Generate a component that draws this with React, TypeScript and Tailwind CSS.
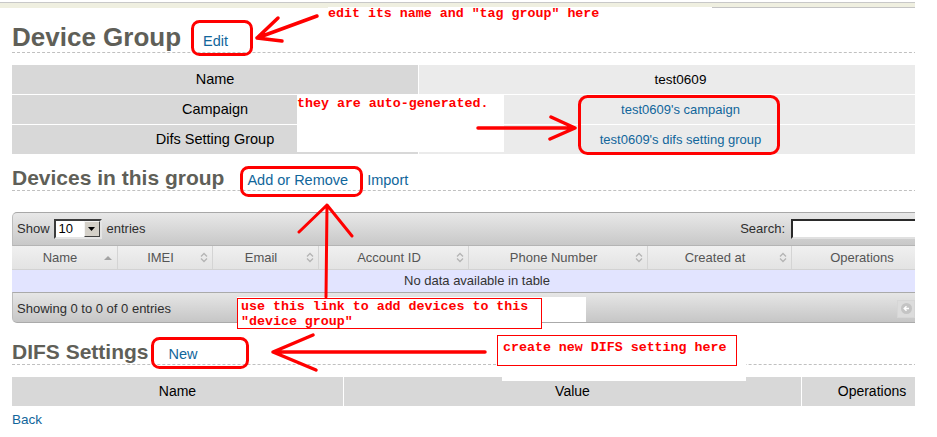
import React from 'react'

const mono = "font-['Liberation_Mono','Courier_New',monospace]"

const dtCols = [
  { label: 'Name', w: 'w-[106px]', sort: 'asc' },
  { label: 'IMEI', w: 'w-[95px]', sort: 'both' },
  { label: 'Email', w: 'w-[106px]', sort: 'both' },
  { label: 'Account ID', w: 'w-[150px]', sort: 'both' },
  { label: 'Phone Number', w: 'w-[179px]', sort: 'both' },
  { label: 'Created at', w: 'w-[144px]', sort: 'both' },
  { label: 'Operations', w: 'w-[150px]', sort: 'none' },
]

function SortIcon({ kind }: { kind: string }) {
  if (kind === 'asc')
    return (
      <svg className="absolute right-[5px] top-[9px]" width="8" height="5" viewBox="0 0 8 5">
        <path d="M0 5 L4 1 L8 5 Z" fill="#a3a3a3" />
      </svg>
    )
  if (kind === 'both')
    return (
      <svg className="absolute right-[4px] top-[6px]" width="8" height="11" viewBox="0 0 8 11">
        <path d="M1 4.5 L4 1.5 L7 4.5 M1 6.5 L4 9.5 L7 6.5" fill="none" stroke="#b4b4b4" strokeWidth="1.3" />
      </svg>
    )
  return null
}

function SectionHeading({ title, children }: { title: string; children?: React.ReactNode }) {
  return (
    <div className="flex h-[25px] items-baseline border-b border-dashed border-[#c0c0c0] leading-[24px]">
      <h2 className="text-[21px] font-bold text-[#5f5f58]">{title}</h2>
      {children}
    </div>
  )
}

export default function App() {
  return (
    <div className="relative h-[437px] w-[937px] overflow-hidden bg-white font-['Liberation_Sans',Arial,sans-serif]">
      {/* page, cropped at 915px */}
      <div className="w-[915px] overflow-hidden">
        {/* top strip */}
        <div className="mt-[2px] flex border-t border-[#c8c8c8]">
          <div className="h-[5px] w-[712px] bg-[#efefe0]" />
          <div className="h-[5px] flex-1 border-b border-[#c4c4c4] bg-[#efefe0]" />
        </div>

        <div className="ml-3 w-[930px]">
          {/* Device Group */}
          <div className="mt-[14px] flex h-[31px] items-baseline border-b border-dashed border-[#c0c0c0] leading-[30px]">
            <h1 className="text-[26px] font-bold text-[#5f5f58]">Device Group</h1>
            <a className="ml-[22px] text-[14.5px] text-[#11669b]">Edit</a>
          </div>

          <div className="mt-[12px] grid grid-cols-[406px_1fr] gap-px text-[14.5px] leading-[29px] text-black">
            <div className="h-[29px] bg-[#d8d8d8] text-center">Name</div>
            <div className="h-[29px] bg-[#ebebeb] text-center text-[13.5px]">test0609</div>
            <div className="h-[29px] bg-[#d8d8d8] text-center">Campaign</div>
            <div className="h-[29px] bg-[#ebebeb] text-center text-[13px] text-[#11669b]">test0609's campaign</div>
            <div className="h-[29px] bg-[#d8d8d8] text-center">Difs Setting Group</div>
            <div className="h-[29px] bg-[#ebebeb] text-center text-[13px] text-[#11669b]">test0609's difs setting group</div>
          </div>

          {/* Devices in this group */}
          <div className="mt-[12px]">
            <SectionHeading title="Devices in this group">
              <a className="ml-[23px] text-[14.5px] text-[#11669b]">Add or Remove</a>
              <a className="ml-[19px] text-[14.5px] text-[#11669b]">Import</a>
            </SectionHeading>
          </div>

          <div className="mt-[21px] w-[930px] text-[13px]">
            <div className="flex h-[34px] items-center justify-between rounded-tl-[5px] border-y border-l border-t-[#a8a8a8] border-b-[#b4b4b4] border-l-[#bdbdbd] bg-gradient-to-b from-[#e8e8e8] to-[#c8c8c8] pl-[4px] pr-[5px] text-[#2e2e2e]">
              <div className="flex items-center">
                <span>Show</span>
                <span className="ml-[4px] flex h-[20px] w-[48px] items-center border-2 border-b-[#e4e4e4] border-l-[#3c3c3c] border-r-[#e4e4e4] border-t-[#3c3c3c] bg-white">
                  <span className="flex-1 pl-[3px] text-[13px] text-black">10</span>
                  <span className="flex h-[16px] w-[16px] items-center justify-center border border-b-[#404040] border-l-[#f4f4f4] border-r-[#404040] border-t-[#f4f4f4] bg-[#d4d0c8]">
                    <svg width="7" height="4" viewBox="0 0 7 4">
                      <path d="M0 0 H7 L3.5 4 Z" fill="#000" />
                    </svg>
                  </span>
                </span>
                <span className="ml-[5px]">entries</span>
              </div>
              <div className="flex items-center">
                <span>Search:</span>
                <span className="ml-[6px] h-[20px] w-[146px] border-2 border-b-[#e0e0e0] border-l-[#2a2a2a] border-r-[#e0e0e0] border-t-[#2a2a2a] bg-white" />
              </div>
            </div>

            <div className="flex h-[24px] border-b border-[#d2d2d2] bg-gradient-to-b from-[#f0f0f0] to-[#e3e3e3] text-[#555]">
              {dtCols.map(c => (
                <div
                  key={c.label}
                  className={`relative flex h-full items-center justify-center border-r border-[#d4d4d4] pl-[4px] pr-[13px] ${c.w}`}
                >
                  {c.label}
                  <SortIcon kind={c.sort} />
                </div>
              ))}
            </div>

            <div className="flex h-[22px] items-center justify-center bg-[#e2e4ff] text-[#333]">
              No data available in table
            </div>

            <div className="flex h-[31px] items-center justify-between rounded-bl-[5px] border-y border-l border-y-[#aaa] border-l-[#bdbdbd] bg-gradient-to-b from-[#e6e6e6] to-[#c6c6c6] pl-[4px] pr-[9px] pt-[2px] text-[#2e2e2e]">
              <span>Showing 0 to 0 of 0 entries</span>
              <div className="flex">
                <span className="flex h-[18px] w-[18px] items-center justify-center border border-[#d6d6d6] bg-[#dcdcdc]">
                  <svg width="11" height="11" viewBox="0 0 11 11">
                    <circle cx="5.5" cy="5.5" r="5.5" fill="#c4c4c4" />
                    <path d="M8 5.5 H3.5 M5.5 3.3 L3.2 5.5 L5.5 7.7" fill="none" stroke="#fff" strokeWidth="1.4" />
                  </svg>
                </span>
                <span className="flex h-[18px] w-[18px] items-center justify-center border border-[#d6d6d6] bg-[#dcdcdc]">
                  <svg width="11" height="11" viewBox="0 0 11 11">
                    <circle cx="5.5" cy="5.5" r="5.5" fill="#c4c4c4" />
                    <path d="M3 5.5 H7.5 M5.5 3.3 L7.8 5.5 L5.5 7.7" fill="none" stroke="#fff" strokeWidth="1.4" />
                  </svg>
                </span>
              </div>
            </div>
          </div>

          {/* DIFS Settings */}
          <div className="mt-[17px]">
            <SectionHeading title="DIFS Settings">
              <a className="ml-[20px] text-[14.5px] text-[#11669b]">New</a>
            </SectionHeading>
          </div>

          <div className="mt-[12px] grid grid-cols-[331px_457px_1fr] gap-px text-[14px] leading-[29px] text-black">
            <div className="h-[29px] bg-[#d8d8d8] text-center">Name</div>
            <div className="h-[29px] bg-[#d8d8d8] text-center">Value</div>
            <div className="h-[29px] bg-[#d8d8d8] text-center">Operations</div>
          </div>

          <a className="mt-[6px] block text-[13.5px] leading-[16px] text-[#11669b]">Back</a>
        </div>
      </div>

      {/* annotations */}
      <div className={`absolute left-[328px] top-[7px] h-[15px] w-[384px] bg-white text-[13.3px] font-bold leading-[14px] text-[#ff0000] ${mono}`}>
        edit its name and "tag group" here
      </div>
      <div className={`absolute left-[297px] top-[95px] h-[57px] w-[207px] bg-white pt-[2px] text-[13.3px] font-bold leading-[14px] text-[#ff0000] ${mono}`}>
        they are auto-generated.
      </div>
      <div className="absolute left-[237px] top-[297px] h-[25px] w-[349px] bg-white" />
      <div className={`absolute left-[237px] top-[298px] h-[31px] w-[305px] border border-[#ff0000] bg-white pl-[3px] text-[13.3px] font-bold leading-[15px] text-[#ff0000] ${mono}`}>
        use this link to add devices to this
        <br />
        "device group"
      </div>
      <div className="absolute left-[502px] top-[335px] h-[46px] w-[244px] bg-white" />
      <div className={`absolute left-[497px] top-[335px] h-[31px] w-[240px] border border-[#ff0000] bg-white pl-[5px] pt-[5px] text-[13.3px] font-bold leading-[14px] text-[#ff0000] ${mono}`}>
        create new DIFS setting here
      </div>

      <svg className="pointer-events-none absolute inset-0" width="937" height="437" viewBox="0 0 937 437">
        <g fill="none" stroke="#ff0000" strokeWidth="3" strokeLinecap="round" strokeLinejoin="round">
          <rect x="192.5" y="21.5" width="59" height="33" rx="7" />
          <rect x="579.5" y="96.5" width="199" height="57" rx="8" />
          <rect x="241.5" y="167.5" width="120" height="28" rx="7" />
          <rect x="152.5" y="338.5" width="95" height="29" rx="7" />

          <path d="M317 16 L257 38 M278 18 L257 38 L282 41" strokeWidth="3.5" />
          <path d="M478 128 H575 M551 117 L575 128 L550 139" strokeWidth="3.5" />
          <path d="M326 297 L327 205 M299 232 L327 205 L352 236" strokeWidth="3" />
          <path d="M485 352 H273 M313 335 L273 352 L316 370" strokeWidth="3.5" />
        </g>
      </svg>
    </div>
  )
}
